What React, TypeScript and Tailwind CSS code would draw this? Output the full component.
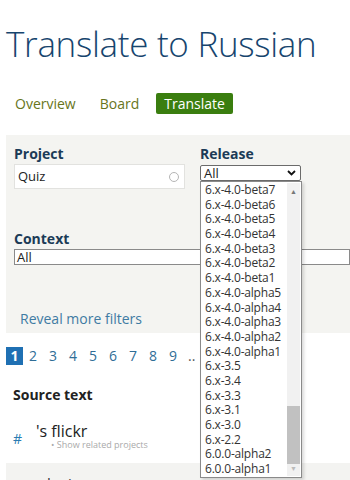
const releases = [
  '6.x-4.0-beta7',
  '6.x-4.0-beta6',
  '6.x-4.0-beta5',
  '6.x-4.0-beta4',
  '6.x-4.0-beta3',
  '6.x-4.0-beta2',
  '6.x-4.0-beta1',
  '6.x-4.0-alpha5',
  '6.x-4.0-alpha4',
  '6.x-4.0-alpha3',
  '6.x-4.0-alpha2',
  '6.x-4.0-alpha1',
  '6.x-3.5',
  '6.x-3.4',
  '6.x-3.3',
  '6.x-3.1',
  '6.x-3.0',
  '6.x-2.2',
  '6.0.0-alpha2',
  '6.0.0-alpha1',
]

function ReleaseList() {
  return (
    <div className="absolute left-[200px] top-[181px] w-[102px] h-[297px] bg-white border border-[#8a8a8a] shadow-[2px_2px_3px_rgba(0,0,0,0.15)] flex">
      <ul className="flex-1 pl-[4px] pt-[1px] text-[12px] tracking-[-0.2px] text-[#333]">
        {releases.map(r => (
          <li key={r} className="h-[14.7px] leading-[14.7px] whitespace-nowrap">{r}</li>
        ))}
      </ul>
      <div className="w-[13px] mr-[1px] my-[1px] bg-[#f1f1f1] flex flex-col items-center">
        <span className="text-[7px] text-[#777] leading-[10px] pt-[4px]">▲</span>
        <div className="flex-1" />
        <div className="w-full h-[58px] bg-[#c1c1c1]" />
        <span className="text-[7px] text-[#bbb] leading-[10px] pb-[2px]">▼</span>
      </div>
    </div>
  )
}

export default function App() {
  return (
    <div className="relative w-[350px] h-[480px] overflow-hidden bg-white font-['Open_Sans',sans-serif]">
      <h1 className="pl-[6px] pt-[21px] text-[35px] leading-[46px] font-light text-[#17456e] tracking-[-0.3px]">Translate to Russian</h1>

      <nav className="mt-[26px] flex items-center pl-[9px] text-[14px]">
        <span className="px-[6px] text-[#677520]">Overview</span>
        <span className="ml-[12px] px-[6px] text-[#677520]">Board</span>
        <span className="ml-[11px] px-[8px] h-[21px] leading-[21px] rounded-[2px] bg-[#3a7e0f] text-white">Translate</span>
      </nav>

      <section className="mt-[21px] ml-[6px] h-[198px] bg-[#f4f4f1] pt-[10px] pl-[8px]">
        <div className="flex">
          <div className="w-[186px]">
            <div className="text-[14px] font-bold text-[#1b3b57] leading-[18px]">Project</div>
            <div className="mt-[1px] w-[171px] h-[25px] bg-white border border-[#e2e2df] flex items-center justify-between pl-[3px] pr-[5px] text-[13px] text-[#222]">
              <span>Quiz</span>
              <span className="w-[10px] h-[10px] rounded-full border-[1.5px] border-[#b5b5b5]" />
            </div>
          </div>
          <div>
            <div className="text-[14px] font-bold text-[#1b3b57] leading-[18px]">Release</div>
            <div className="mt-[2px] w-[101px] h-[16px] bg-white border border-[#6b6b6b] rounded-[2px] flex items-center justify-between pl-[3px] pr-[4px] text-[13px] text-[#222]">
              <span className="leading-[14px]">All</span>
              <svg width="9" height="6" viewBox="0 0 9 6"><path d="M1 1l3.5 3.5L8 1" fill="none" stroke="#111" strokeWidth="1.8" /></svg>
            </div>
          </div>
        </div>

        <div className="mt-[41px] text-[14px] font-bold text-[#1b3b57] leading-[18px]">Context</div>
        <div className="mt-[1px] h-[16px] bg-white border border-[#8a8a8a] pl-[2px] text-[13px] leading-[14px] text-[#222]">All</div>

        <div className="mt-[43px] pl-[6px] text-[14px] text-[#3f7ba3]">Reveal more filters</div>
      </section>

      <div className="mt-[12px] ml-[6px] flex items-center text-[14px] text-[#2f6d96]">
        <span className="w-[17px] h-[18px] bg-[#1f70b3] text-white font-bold text-center leading-[18px]">1</span>
        {['2', '3', '4', '5', '6', '7', '8', '9'].map(n => (
          <span key={n} className="w-[20px] text-center first:ml-[1px]">{n}</span>
        ))}
        <span className="ml-[5px] text-[#555]">..</span>
      </div>

      <div className="mt-[18px] ml-[13px] text-[14px] font-bold text-[#222]">Source text</div>

      <div className="mt-[18px] flex items-start">
        <span className="ml-[13px] mt-[5px] text-[14px] text-[#2a7cb2]">#</span>
        <div className="ml-[14px]">
          <div className="text-[16px] leading-[16px] text-[#222]">'s flickr</div>
          <div className="ml-[15px] text-[9px] leading-[11px] text-[#aaa]">• Show related projects</div>
        </div>
      </div>

      <div className="mt-[13px] ml-[6px] h-[20px] bg-[#f3f3f1] pl-[32px] pt-[12px] text-[15px] leading-[16px] text-[#333]">ologies</div>

      <ReleaseList />
    </div>
  )
}
